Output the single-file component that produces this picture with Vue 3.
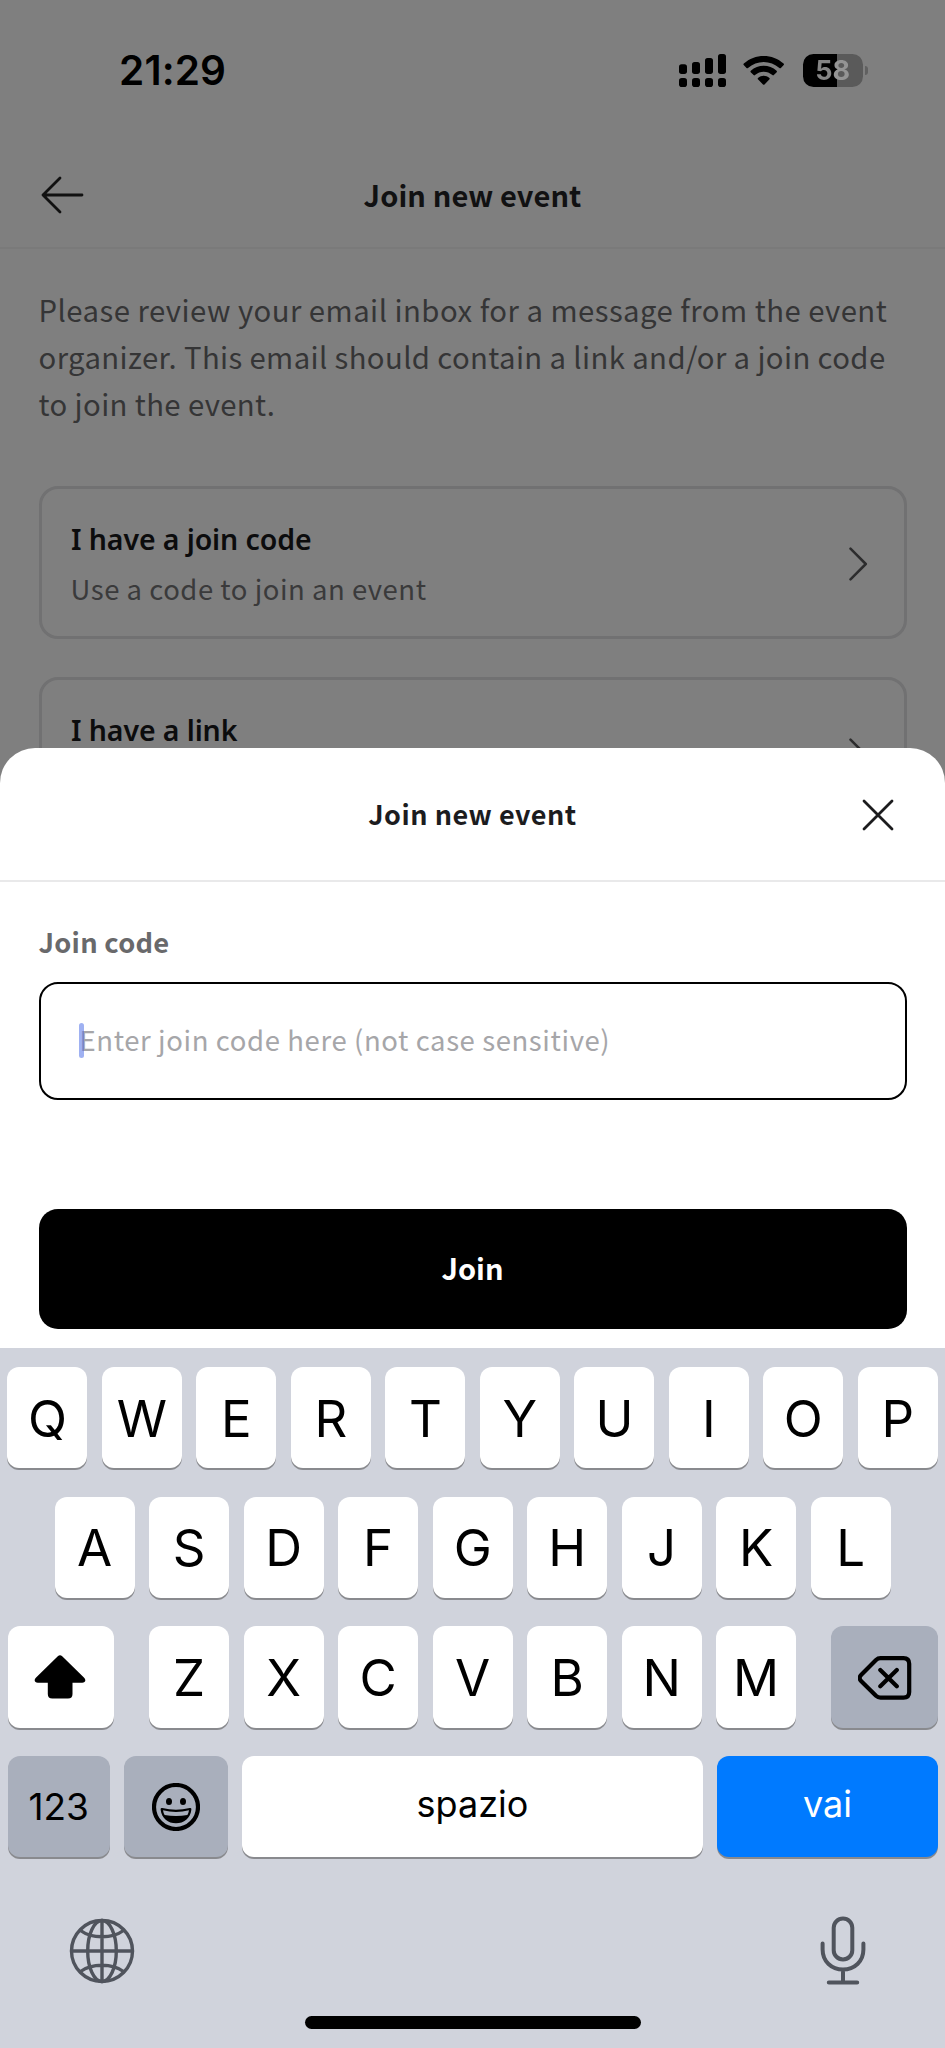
<script setup>
const topRow = [...'QWERTYUIOP']
const homeRow = [...'ASDFGHJKL']
const bottomRow = [...'ZXCVBNM']
const cards = [
  { title: 'I have a join code', text: 'Use a code to join an event' },
  { title: 'I have a link', text: '' }
]
</script>

<template>
  <div class="phone">
    <div class="status">
      <span class="time">21:29</span>
      <div class="indicators">
        <svg class="signal" width="48" height="34" viewBox="0 0 48 34">
          <rect x="0" y="10.3" width="8" height="9.6" rx="2.6" />
          <rect x="13" y="8" width="8" height="11.9" rx="2.6" />
          <rect x="26" y="4" width="8" height="15.9" rx="2.6" />
          <rect x="39" y="0" width="8" height="19.9" rx="2.6" />
          <rect v-for="x in [0, 13, 26, 39]" :key="x" :x="x" y="24" width="8" height="9" rx="2.8" />
        </svg>
        <svg class="wifi" width="42" height="32" viewBox="0 0 42 32">
          <path d="M0.8 8.6C11.6-1.7 29.8-1.7 40.6 8.6c.5.5.5 1 .1 1.5l-2.8 2.8c-.5.5-1 .5-1.5 0C27.6 4.9 13.8 4.9 5 12.9c-.5.5-1 .5-1.5 0L.7 10.1c-.4-.5-.4-1 .1-1.5z" />
          <path d="M7.8 15.7c7.2-6.6 18.6-6.6 25.8 0 .5.5.5 1 .1 1.5l-2.9 2.9c-.5.4-.9.4-1.4 0-5-4.5-12.4-4.5-17.4 0-.5.4-.9.4-1.4 0l-2.9-2.9c-.4-.5-.4-1 .1-1.5z" />
          <path d="M15 22.9c3.4-2.8 8-2.8 11.4 0 .5.5.5 1 .1 1.4L21.5 29.400c-.5.5-1 .5-1.5 0l-5.1-5.1c-.4-.4-.4-.9.1-1.4z" />
        </svg>
        <div class="battery-wrap">
          <div class="battery"><span>58</span></div>
          <i class="nub"></i>
        </div>
      </div>
    </div>

    <header class="header">
      <svg class="back" width="44" height="38" viewBox="0 0 44 38">
        <path d="M41 19H2M19 2 2 19l17 17" />
      </svg>
      <h1>Join new event</h1>
    </header>

    <main class="content">
      <p class="intro">
        <span class="loose">Please review your email inbox for a message from the event</span><br />
        <span>organizer. This email should contain a link and/or a join code</span><br />
        <span>to join the event.</span>
      </p>
      <div v-for="card in cards" :key="card.title" class="card">
        <div>
          <h2>{{ card.title }}</h2>
          <p>{{ card.text }}</p>
        </div>
        <svg width="19" height="34" viewBox="0 0 19 34"><path d="M1.5 1.7 16.8 17 1.5 32.3" /></svg>
      </div>
    </main>

    <section class="sheet">
      <div class="sheet-head">
        <h2>Join new event</h2>
        <svg class="close" width="32" height="32" viewBox="0 0 32 32"><path d="M2 2 30 30M30 2 2 30" /></svg>
      </div>
      <div class="form">
        <label>Join code</label>
        <div class="input"><i class="caret"></i>Enter join code here (not case sensitive)</div>
        <button class="join">Join</button>
      </div>

      <div class="keyboard">
        <div class="row"><span v-for="k in topRow" :key="k" class="key">{{ k }}</span></div>
        <div class="row home-row"><span v-for="k in homeRow" :key="k" class="key">{{ k }}</span></div>
        <div class="row spread">
          <span class="key wide">
            <svg class="shift" width="52" height="46" viewBox="0 0 52 46">
              <path d="M23.8 2.2Q26 .2 28.200 2.200L49.900 23.500C52.600 26.200 51.200 28.800 48.200 28.800H38.500V40Q38.500 44.500 34 44.500H18.300Q13.800 44.500 13.800 40V28.800H3.800C.8 28.800-.6 26.200 2.100 23.500Z" />
            </svg>
          </span>
          <div class="row"><span v-for="k in bottomRow" :key="k" class="key">{{ k }}</span></div>
          <span class="key wide gray">
            <svg class="line" width="54" height="46" viewBox="0 0 54 46">
              <path d="M22.5 3.2H45.5Q51.2 3.2 51.2 8.8V37.1Q51.2 42.7 45.5 42.7H22.5Q20 42.7 18 40.8L3.3 26.2Q0 23 3.3 19.7L18 5.1Q20 3.2 22.5 3.2ZM22.3 14.9 38.8 31.2M38.8 14.9 22.3 31.2" />
            </svg>
          </span>
        </div>
        <div class="last-row">
          <span class="key gray numbers">123</span>
          <span class="key gray">
            <svg width="48" height="48" viewBox="0 0 48 48">
              <circle cx="24" cy="24" r="22" fill="none" stroke="#000" stroke-width="4.200" />
              <ellipse cx="17" cy="18.500" rx="3" ry="3.500" />
              <ellipse cx="31" cy="18.500" rx="3" ry="3.500" />
              <path d="M8.600 26.500Q8.500 24.700 10.300 25.100Q24 28.600 37.700 25.100Q39.500 24.700 39.400 26.500C38.300 35.500 32 40.300 24 40.300S9.700 35.500 8.600 26.500Z" />
              <path d="M11 27.300Q24 30.600 37 27.300Q36.600 30 35.400 31.900Q24 34 12.600 31.900Q11.400 30 11 27.300Z" fill="#a9afbc" />
            </svg>
          </span>
          <span class="key word">spazio</span>
          <span class="key word go">vai</span>
        </div>
        <div class="tools">
          <svg width="66" height="66" viewBox="0 0 66 66" stroke-width="3.400">
            <circle cx="33" cy="33" r="30.500" />
            <ellipse cx="33" cy="33" rx="14.300" ry="30.500" />
            <path d="M33 2.500V63.500M2.500 33H63.500M11.500 12.500Q20 18.800 33 18.800T54.500 12.500M11.500 53.500Q20 47.200 33 47.200T54.500 53.500" />
          </svg>
          <svg width="46" height="70" viewBox="0 0 46 70" stroke-width="4">
            <rect x="13.700" y="2.500" width="18.600" height="41" rx="9.300" />
            <path d="M2.600 27.500V33.500C2.600 45.500 11.500 53.500 23 53.500S43.400 45.500 43.400 33.500V27.500M23 53.500V66.500M8.800 66.500H37.200" />
          </svg>
        </div>
        <div class="home"></div>
      </div>
    </section>
  </div>
</template>

<style>
body { margin: 0; background: #7f7f7f; }
</style>

<style scoped>
* { box-sizing: border-box; }
h1, h2, p { margin: 0; }
svg { display: block; flex: none; }

.phone {
  position: relative;
  width: 945px;
  height: 2048px;
  overflow: hidden;
  background: #7f7f7f;
  font-family: "Noto Sans CJK JP", "Noto Sans", sans-serif;
}

.status {
  display: flex;
  justify-content: space-between;
  align-items: center;
  height: 141px;
  padding: 0 77px 0 119px;
}
.time { font: 600 40.5px/48px Inter, sans-serif; letter-spacing: 0.15px; }
.indicators { display: flex; align-items: center; }
.wifi { margin: 0 18px 0 16px; }
.battery-wrap { display: flex; align-items: center; }
.battery {
  display: flex;
  align-items: center;
  justify-content: center;
  width: 60.5px;
  height: 33px;
  border-radius: 10.5px;
  background: linear-gradient(90deg, #000 34.5px, #5a5a5a 34.5px);
}
.battery span {
  font: 700 27px/33px Inter, sans-serif;
  color: transparent;
  background: linear-gradient(90deg, #858585 19px, #949494 19px);
  background-clip: text;
  -webkit-background-clip: text;
}
.nub { width: 3px; height: 9px; margin-left: 2px; border-radius: 0 4px 4px 0; background: #606060; }

.header {
  position: relative;
  display: flex;
  align-items: center;
  justify-content: center;
  height: 108px;
  padding-bottom: 1px;
  border-bottom: 2px solid #7a7a7a;
}
.header h1 { font-size: 29px; line-height: 44px; font-weight: 600; color: #111112; letter-spacing: 0.1px; }
.back { position: absolute; left: 41px; top: 34.5px; fill: none; stroke: #111; stroke-width: 2.8; stroke-linecap: round; stroke-linejoin: round; }

.content { padding: 36.5px 38.5px 0; }
.intro { font-size: 29.3px; line-height: 47.3px; letter-spacing: 0.38px; font-weight: 380; color: #353536; white-space: nowrap; }
.loose { letter-spacing: 0.47px; }
.card {
  display: flex;
  justify-content: space-between;
  align-items: center;
  height: 153px;
  margin-top: 38px;
  padding: 2px 36px 0 29.5px;
  border: 3px solid #717172;
  border-radius: 19px;
}
.intro + .card { margin-top: 59px; }
.card h2 { font: 600 28.5px/44px "Noto Sans", sans-serif; letter-spacing: -0.1px; color: #0c0c0d; }
.card p { height: 44px; margin: 5px 0 0 -0.5px; font-size: 27.5px; line-height: 44px; letter-spacing: 0.52px; font-weight: 380; color: #3a3a3b; }
.card svg { fill: none; stroke: #2c2c2d; stroke-width: 2.5; stroke-linecap: round; stroke-linejoin: round; }

.sheet {
  position: absolute;
  left: 0;
  right: 0;
  top: 747.5px;
  bottom: 0;
  display: flex;
  flex-direction: column;
  border-radius: 35px 35px 0 0;
  background: #fff;
}
.sheet-head {
  position: relative;
  display: flex;
  align-items: center;
  justify-content: center;
  height: 134.5px;
  border-bottom: 2px solid #e9e9ea;
}
.sheet-head h2 { font-size: 27px; line-height: 40px; font-weight: 600; letter-spacing: 0.5px; color: #1c1c1e; }
.close { position: absolute; right: 51.5px; top: 51.5px; fill: none; stroke: #1c1c1e; stroke-width: 2.8; stroke-linecap: round; }
.form { height: 466px; padding: 38.5px 38.5px 0; }
.form label { display: block; font-size: 27.3px; line-height: 40px; font-weight: 600; letter-spacing: 0.25px; color: #69696b; }
.input {
  position: relative;
  display: flex;
  align-items: center;
  height: 118px;
  margin-top: 21px;
  padding: 0 0 4px 39px;
  border: 2.5px solid #000;
  border-radius: 19px;
  font-size: 27.5px;
  font-weight: 380;
  letter-spacing: 0.6px;
  color: #a6a6a9;
  white-space: nowrap;
}
.caret { position: absolute; left: 38.5px; top: 39px; width: 5px; height: 35.5px; border-radius: 3px; background: rgba(70, 105, 230, 0.52); }
.join {
  display: block;
  width: 100%;
  height: 120px;
  margin-top: 109.5px;
  padding: 0 0 4px;
  border: 0;
  border-radius: 19px;
  background: #000;
  color: #fff;
  font: 600 29px/44px "Noto Sans CJK JP", sans-serif;
}

.keyboard {
  flex: 1;
  display: flex;
  flex-direction: column;
  gap: 28.4px;
  padding: 19px 7.2px 0 7.5px;
  background: #d0d3dc;
  font-family: Inter, sans-serif;
}
.row { display: flex; justify-content: center; gap: 14.5px; }
.spread { justify-content: space-between; }
.key {
  display: flex;
  align-items: center;
  justify-content: center;
  width: 80px;
  height: 101.3px;
  padding-top: 2px;
  border-radius: 12px;
  background: #fff;
  box-shadow: 0 2px 0 #898a8e;
  font-size: 51px;
  font-weight: 380;
  line-height: 60px;
  color: #000;
}
.wide { width: 106.5px; }
.gray { background: #a9afbc; }
.shift { margin: 0 2px 2px 0; }
.line { fill: none; stroke: #000; stroke-width: 4.2; stroke-linecap: round; stroke-linejoin: round; }
.last-row { display: grid; grid-template-columns: 102.3px 103.7px 1fr 220.8px; column-gap: 14.5px; }
.last-row .key { width: auto; padding-top: 0; }
.last-row .numbers { font-size: 37px; }
.last-row .word { font-size: 36px; padding-bottom: 5px; }
.last-row .go { background: #007aff; color: #fff; }
.tools { display: flex; justify-content: space-between; align-items: center; height: 72px; margin-top: 29px; padding: 0 72px 0 61px; }
.tools svg { fill: none; stroke: #50545d; stroke-linecap: round; }
.home { width: 336px; height: 12.5px; margin: 1px auto 0; border-radius: 7px; background: #000; }
</style>
